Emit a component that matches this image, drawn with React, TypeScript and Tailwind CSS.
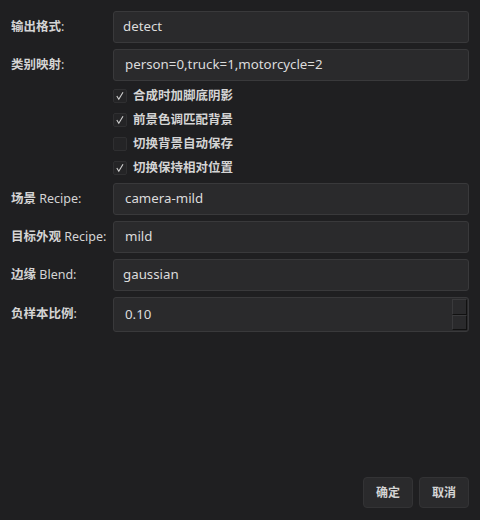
import { useState } from 'react';

const cjk = '"Noto Sans", "Noto Sans CJK SC", sans-serif';

function Label({ zh, en }: { zh: string; en?: string }) {
  return (
    <div className="w-[102px] shrink-0 text-[12.5px] text-[#d4d4d4]">
      <span className="font-bold">{zh}</span>
      {en ? <span> {en}</span> : null}:
    </div>
  );
}

function Field({ value, pad = 'px-[9px]' }: { value: string; pad?: string }) {
  return (
    <div className={`flex-1 h-[32px] flex items-center rounded-[3px] border border-[#39393b] bg-[#2a2a2c] ${pad} text-[13.3px] text-[#dcdcdc]`}>
      {value}
    </div>
  );
}

function Check({ label, checked }: { label: string; checked: boolean }) {
  return (
    <div className="flex items-center h-[24px]">
      <div className="w-[14px] h-[14px] rounded-[2px] border border-[#2f2f31] bg-[#242426] flex items-center justify-center">
        {checked && (
          <svg width="10" height="10" viewBox="0 0 10 10">
            <path d="M1.8 5 L3.8 8.3 L8 1.3" fill="none" stroke="#d0d0d0" strokeWidth="1.1" />
          </svg>
        )}
      </div>
      <span className="ml-[6px] text-[12.5px] font-bold text-[#d4d4d4]">{label}</span>
    </div>
  );
}

export default function App() {
  const [checks] = useState([true, true, false, true]);
  const names = ['合成时加脚底阴影', '前景色调匹配背景', '切换背景自动保存', '切换保持相对位置'];

  return (
    <div className="w-[480px] h-[520px] bg-[#1f1f21] flex flex-col px-[11px] pt-[11px] pb-[12px]" style={{ fontFamily: cjk }}>
      <div className="flex items-center">
        <Label zh="输出格式" />
        <Field value="detect" />
      </div>
      <div className="flex items-center mt-[6px]">
        <Label zh="类别映射" />
        <Field value="person=0,truck=1,motorcycle=2" pad="px-[11px]" />
      </div>

      <div className="flex flex-col pl-[102px] mt-[3px]">
        {names.map((n, i) => (
          <Check key={n} label={n} checked={checks[i]} />
        ))}
      </div>

      <div className="flex items-center mt-[3px]">
        <Label zh="场景" en="Recipe" />
        <Field value="camera-mild" pad="px-[11px]" />
      </div>
      <div className="flex items-center mt-[6px]">
        <Label zh="目标外观" en="Recipe" />
        <Field value="mild" pad="px-[11px]" />
      </div>
      <div className="flex items-center mt-[6px]">
        <Label zh="边缘" en="Blend" />
        <Field value="gaussian" />
      </div>
      <div className="flex items-center mt-[6px]">
        <Label zh="负样本比例" />
        <div className="flex-1 h-[35px] flex items-center rounded-[3px] border border-[#39393b] bg-[#2a2a2c] pl-[11px] pr-[1px] text-[13.3px] text-[#dcdcdc]">
          <span className="flex-1 pt-[1px]">0.10</span>
          <div className="flex flex-col w-[15px] h-[31px]">
            <div className="flex-1 border border-[#3a3a3c] border-b-[#111] border-r-[#111] bg-[#2a2a2c]" />
            <div className="flex-1 border border-[#3a3a3c] border-b-[#111] border-r-[#111] bg-[#2a2a2c]" />
          </div>
        </div>
      </div>

      <div className="flex-1" />
      <div className="flex justify-end gap-[6px]">
        <button className="w-[50px] h-[31px] rounded-[4px] border border-[#333335] bg-[#2a2a2c] text-[12px] font-bold text-[#d4d4d4]">确定</button>
        <button className="w-[50px] h-[31px] rounded-[4px] border border-[#333335] bg-[#2a2a2c] text-[12px] font-bold text-[#d4d4d4]">取消</button>
      </div>
    </div>
  );
}
